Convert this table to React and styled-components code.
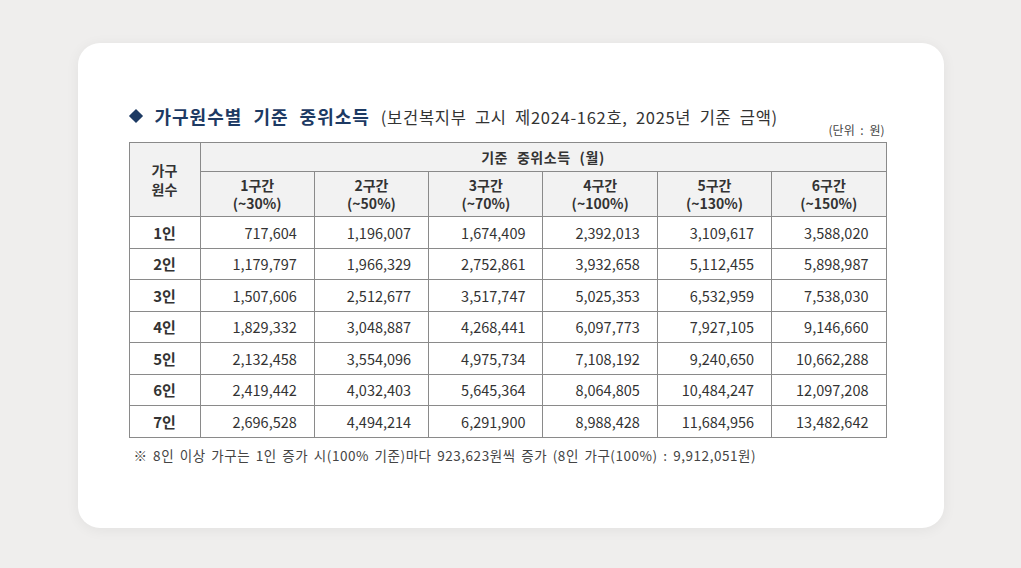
import React from "react";
import styled, { createGlobalStyle } from "styled-components";

const Global = createGlobalStyle`
  html, body { margin: 0; padding: 0; }
  body {
    background: #efeeed;
    font-family: "Noto Sans CJK KR", "Noto Sans", sans-serif;
    color: #333;
  }
`;

const Page = styled.div`
  width: 1021px;
  height: 568px;
  box-sizing: border-box;
  padding-top: 43px;
  display: flex;
  justify-content: center;
  align-items: flex-start;
`;

const Card = styled.div`
  width: 866px;
  height: 485px;
  box-sizing: border-box;
  background: #fff;
  border-radius: 22px;
  box-shadow: 0 2px 14px rgba(0, 0, 0, 0.06);
  padding: 62px 0 0 51px;
  display: flex;
  flex-direction: column;
`;

const Content = styled.div`
  width: 758px;
  display: flex;
  flex-direction: column;
`;

const TitleRow = styled.div`
  display: flex;
  align-items: baseline;
  height: 22px;
  line-height: 22px;
  white-space: nowrap;
`;

const Diamond = styled.span`
  width: 10px;
  height: 10px;
  background: #1d3a63;
  transform: rotate(45deg);
  margin: 0 14px 0 2px;
  align-self: center;
  flex: none;
`;

const Title = styled.span`
  font-size: 18px;
  font-weight: 700;
  color: #1d3a63;
  letter-spacing: 1px;
  word-spacing: 6px;
`;

const Sub = styled.span`
  font-size: 16.5px;
  color: #333;
  margin-left: 11px;
  letter-spacing: 0.7px;
  word-spacing: 4px;
`;

const Unit = styled.div`
  align-self: flex-end;
  font-size: 12px;
  line-height: 14px;
  color: #444;
  margin-top: -4px;
  margin-right: 2px;
  word-spacing: 3px;
`;

const Table = styled.table`
  margin-top: 5px;
  width: 758px;
  border-collapse: collapse;
  table-layout: fixed;
  border: 1.5px solid #666;
`;

const Th = styled.th`
  background: #f2f2f2;
  border: 1px solid #8a8a8a;
  font-size: 14px;
  font-weight: 700;
  color: #333;
  line-height: 18.5px;
  padding: 0;
  height: ${(p) => p.$h || 30}px;
  text-align: center;
  vertical-align: middle;
  letter-spacing: ${(p) => (p.$wide ? "0.6px" : "0")};
  word-spacing: ${(p) => (p.$wide ? "5px" : "0")};
`;

const Td = styled.td`
  border: 1px solid #8a8a8a;
  font-size: 14.5px;
  color: #333;
  height: 30.5px;
  padding: 0 17px 0 0;
  text-align: right;
  vertical-align: middle;
`;

const RowHead = styled.td`
  border: 1px solid #8a8a8a;
  font-size: 15px;
  font-weight: 700;
  color: #333;
  height: 30.5px;
  padding: 0;
  text-align: center;
  vertical-align: middle;
`;

const Note = styled.div`
  margin-top: 7px;
  margin-left: 5px;
  font-size: 13.5px;
  color: #444;
  white-space: nowrap;
  letter-spacing: 0.55px;
  word-spacing: 2px;
`;

const bands = [
  ["1구간", "(~30%)"],
  ["2구간", "(~50%)"],
  ["3구간", "(~70%)"],
  ["4구간", "(~100%)"],
  ["5구간", "(~130%)"],
  ["6구간", "(~150%)"],
];

const rows = [
  ["1인", "717,604", "1,196,007", "1,674,409", "2,392,013", "3,109,617", "3,588,020"],
  ["2인", "1,179,797", "1,966,329", "2,752,861", "3,932,658", "5,112,455", "5,898,987"],
  ["3인", "1,507,606", "2,512,677", "3,517,747", "5,025,353", "6,532,959", "7,538,030"],
  ["4인", "1,829,332", "3,048,887", "4,268,441", "6,097,773", "7,927,105", "9,146,660"],
  ["5인", "2,132,458", "3,554,096", "4,975,734", "7,108,192", "9,240,650", "10,662,288"],
  ["6인", "2,419,442", "4,032,403", "5,645,364", "8,064,805", "10,484,247", "12,097,208"],
  ["7인", "2,696,528", "4,494,214", "6,291,900", "8,988,428", "11,684,956", "13,482,642"],
];

export default function App() {
  return (
    <>
      <Global />
      <Page>
        <Card>
          <Content>
            <TitleRow>
              <Diamond />
              <Title>가구원수별 기준 중위소득</Title>
              <Sub>(보건복지부 고시 제2024-162호, 2025년 기준 금액)</Sub>
            </TitleRow>
            <Unit>(단위 : 원)</Unit>
            <Table>
              <colgroup>
                <col style={{ width: 71 }} />
                {bands.map((b) => (
                  <col key={b[0]} />
                ))}
              </colgroup>
              <thead>
                <tr>
                  <Th rowSpan={2}>
                    가구
                    <br />
                    원수
                  </Th>
                  <Th colSpan={6} $h={28} $wide>
                    기준 중위소득 (월)
                  </Th>
                </tr>
                <tr>
                  {bands.map((b) => (
                    <Th key={b[0]} $h={44}>
                      {b[0]}
                      <br />
                      {b[1]}
                    </Th>
                  ))}
                </tr>
              </thead>
              <tbody>
                {rows.map((r) => (
                  <tr key={r[0]}>
                    <RowHead>{r[0]}</RowHead>
                    {r.slice(1).map((v, i) => (
                      <Td key={i}>{v}</Td>
                    ))}
                  </tr>
                ))}
              </tbody>
            </Table>
            <Note>※ 8인 이상 가구는 1인 증가 시(100% 기준)마다 923,623원씩 증가 (8인 가구(100%) : 9,912,051원)</Note>
          </Content>
        </Card>
      </Page>
    </>
  );
}
